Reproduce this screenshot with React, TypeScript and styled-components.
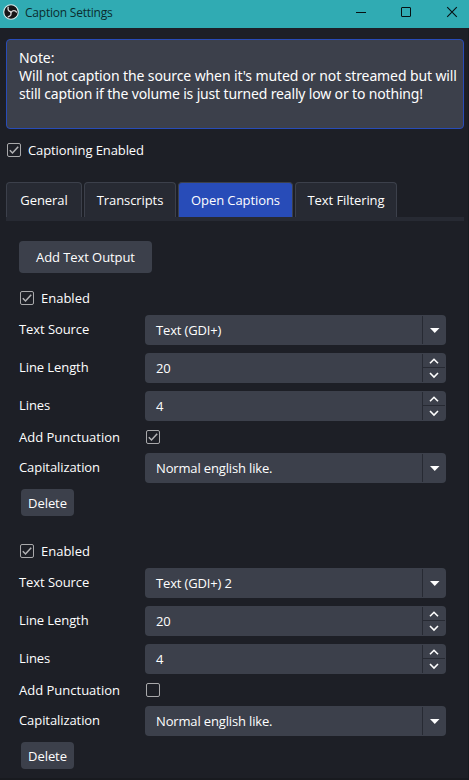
import React, { useState } from "react";
import styled, { createGlobalStyle } from "styled-components";

const GlobalStyle = createGlobalStyle`
  * { box-sizing: border-box; }
  body { margin: 0; background: #1d1f26; }
`;

const Window = styled.main`
  width: 469px;
  height: 780px;
  overflow: hidden;
  display: flex;
  flex-direction: column;
  background: #1d1f26;
  color: #fefefe;
  font: 13px/18px "Open Sans", sans-serif;
  box-shadow: inset -1px -2px #181a1f;
`;

const TitleBar = styled.header`
  flex: none;
  width: 469px;
  height: 28px;
  display: flex;
  align-items: center;
  padding: 0 10px 4px 3px;
  background: #30abb3;
  color: #0b2c2e;
`;

const Title = styled.h1`
  margin: 0 auto 0 6px;
  padding-top: 1px;
  font: 12px/18px "Open Sans", sans-serif;
  letter-spacing: -0.22px;
`;

const WindowControls = styled.div`
  display: flex;
  gap: 29px;
`;

const ControlButton = styled.button`
  width: 16px;
  height: 16px;
  padding: 0;
  border: 0;
  background: none;
  color: #071012;
  svg { display: block; }
`;

const Body = styled.div`
  display: flex;
  flex-direction: column;
  padding: 11px 5px 0 6px;
`;

const Note = styled.div`
  width: 458px;
  height: 90px;
  padding: 9px 0 0 12px;
  border: 1px solid #284cb8;
  border-radius: 4px;
  background: #3c404b;
  font: 14px/18px "Noto Sans", sans-serif;
  white-space: nowrap;
`;

const NoteLine = styled.div<{ $spacing: number }>`
  letter-spacing: ${(p) => p.$spacing}px;
`;

const CheckLabel = styled.label`
  display: flex;
  align-items: center;
  gap: 7px;
  height: 14px;
  padding-left: 1px;
  white-space: nowrap;
`;

const MainCheck = styled.div`
  margin-top: 14px;
  letter-spacing: -0.1px;
`;

const CheckBox = styled.button`
  flex: none;
  width: 14px;
  height: 14px;
  padding: 0;
  border: 1px solid #a9a9ab;
  border-radius: 2px;
  background: transparent;
  color: #b4b4b6;
  svg { display: block; }
`;

const Tabs = styled.nav`
  display: flex;
  gap: 2px;
  width: 458px;
  height: 39px;
  margin-top: 25px;
  border-bottom: 4px solid #272a33;
`;

const Tab = styled.button<{ $width: number; $active: boolean }>`
  width: ${(p) => p.$width}px;
  height: 35px;
  padding: 0 0 1px;
  border: 1px solid #3c404b;
  border-bottom: 0;
  border-radius: 4px 4px 0 0;
  background: ${(p) => (p.$active ? "#284cb8" : "#272a33")};
  color: inherit;
  font: inherit;
  letter-spacing: -0.08px;
  white-space: nowrap;
`;

const Panel = styled.section`
  display: flex;
  flex-direction: column;
  padding: 20px 13px 0;
`;

const Button = styled.button<{ $small?: boolean }>`
  width: ${(p) => (p.$small ? 53 : 133)}px;
  height: ${(p) => (p.$small ? 27 : 32)}px;
  margin-left: ${(p) => (p.$small ? 2 : 0)}px;
  padding: ${(p) => (p.$small ? "1px 0 0" : "0 0 1px")};
  border: 0;
  border-radius: 4px;
  background: #3c404b;
  color: inherit;
  font: inherit;
  letter-spacing: -0.08px;
  white-space: nowrap;
`;

const Output = styled.section<{ $top: number }>`
  margin-top: ${(p) => p.$top}px;
`;

const Fields = styled.div`
  display: flex;
  flex-direction: column;
  gap: 8px;
  margin: 10px 0 6px;
`;

const Row = styled.div`
  display: grid;
  grid-template-columns: 126px 301px;
  align-items: center;
  height: 30px;
`;

const CheckRow = styled(Row)`
  height: 18px;
  margin: -1px 0;
`;

const Name = styled.span<{ $centered?: boolean }>`
  padding-bottom: ${(p) => (p.$centered ? 0 : 2)}px;
  letter-spacing: ${(p) => (p.$centered ? 0 : -0.08)}px;
`;

const CheckCell = styled.div`
  display: flex;
  padding-left: 1px;
`;

const Field = styled.div`
  display: flex;
  align-items: center;
  height: 30px;
  padding-left: 11px;
  border-radius: 4px;
  background: #3c404b;
`;

const Value = styled.span`
  flex: 1;
  letter-spacing: -0.15px;
`;

const FieldEnd = styled.div`
  display: flex;
  flex-direction: column;
  width: 24px;
  height: 28px;
  border-left: 1px solid #272a33;
  svg { display: block; }
`;

const Step = styled.button`
  display: block;
  width: 22px;
  height: 13px;
  padding: 0;
  border: 0;
  background: none;
  color: #fefefe;
  & + & { height: 14px; border-top: 1px solid #272a33; }
`;

function Check({ initial, label }: { initial: boolean; label: string }) {
  const [on, setOn] = useState(initial);
  return (
    <CheckBox type="button" role="checkbox" aria-checked={on} aria-label={label} onClick={() => setOn(!on)}>
      {on && (
        <svg width="12" height="12" viewBox="0 0 12 12" fill="none" stroke="currentColor" strokeWidth="1.5">
          <path d="M1.8 6.3 4.5 9 10.2 2.7" />
        </svg>
      )}
    </CheckBox>
  );
}

function Logo() {
  return (
    <svg width="16" height="16" viewBox="0 0 16 16">
      <circle cx="8" cy="8" r="7.3" fill="#171516" stroke="#d7eeee" strokeWidth="1.1" />
      <g fill="none" stroke="#d5d3d4" strokeWidth="1.35" strokeLinecap="round">
        <path d="M8 7.6C5.7 7.5 4.5 5.6 5.2 3.3" />
        <path d="M8 7.6C5.7 7.5 4.5 5.6 5.2 3.3" transform="rotate(120 8 8)" />
        <path d="M8 7.6C5.7 7.5 4.5 5.6 5.2 3.3" transform="rotate(240 8 8)" />
      </g>
    </svg>
  );
}

function SelectField({ value }: { value: string }) {
  return (
    <Field>
      <Value>{value}</Value>
      <FieldEnd>
        <svg width="23" height="28" viewBox="0 0 23 28">
          <path d="M7 12h9.5l-4.75 5z" fill="#fefefe" />
        </svg>
      </FieldEnd>
    </Field>
  );
}

function NumberField({ initial }: { initial: number }) {
  const [value, setValue] = useState(initial);
  return (
    <Field>
      <Value>{value}</Value>
      <FieldEnd>
        <Step type="button" aria-label="Increase" onClick={() => setValue(value + 1)}>
          <svg width="22" height="13" viewBox="0 0 22 13" fill="none" stroke="currentColor" strokeWidth="1.6">
            <path d="M7 9.3 11 5.3 15 9.3" />
          </svg>
        </Step>
        <Step type="button" aria-label="Decrease" onClick={() => setValue(value - 1)}>
          <svg width="22" height="13" viewBox="0 0 22 13" fill="none" stroke="currentColor" strokeWidth="1.6">
            <path d="M7 5 11 9 15 5" />
          </svg>
        </Step>
      </FieldEnd>
    </Field>
  );
}

interface OutputProps {
  source: string;
  punctuation: boolean;
  top: number;
}

function TextOutput({ source, punctuation, top }: OutputProps) {
  return (
    <Output $top={top}>
      <CheckLabel>
        <Check initial label="Enabled" />
        Enabled
      </CheckLabel>
      <Fields>
        <Row><Name>Text Source</Name><SelectField value={source} /></Row>
        <Row><Name>Line Length</Name><NumberField initial={20} /></Row>
        <Row><Name>Lines</Name><NumberField initial={4} /></Row>
        <CheckRow>
          <Name $centered>Add Punctuation</Name>
          <CheckCell><Check initial={punctuation} label="Add Punctuation" /></CheckCell>
        </CheckRow>
        <Row><Name>Capitalization</Name><SelectField value="Normal english like." /></Row>
      </Fields>
      <Button $small>Delete</Button>
    </Output>
  );
}

const TABS = [
  { name: "General", width: 76 },
  { name: "Transcripts", width: 92 },
  { name: "Open Captions", width: 115 },
  { name: "Text Filtering", width: 102 },
];

export default function App() {
  return (
    <>
      <GlobalStyle />
      <Window>
        <TitleBar>
          <Logo />
          <Title>Caption Settings</Title>
          <WindowControls>
            <ControlButton aria-label="Minimize">
              <svg width="16" height="16" stroke="currentColor"><path d="M3 8.5h10" /></svg>
            </ControlButton>
            <ControlButton aria-label="Maximize">
              <svg width="16" height="16" fill="none" stroke="currentColor"><rect x="3.5" y="3.5" width="9" height="9" rx="0.5" /></svg>
            </ControlButton>
            <ControlButton aria-label="Close">
              <svg width="16" height="16" stroke="currentColor" strokeWidth="1.1"><path d="M4.2 3.2 13.8 12.8M13.8 3.2 4.2 12.8" /></svg>
            </ControlButton>
          </WindowControls>
        </TitleBar>
        <Body>
          <Note>
            <NoteLine $spacing={-0.1}>Note:</NoteLine>
            <NoteLine $spacing={-0.11}>Will not caption the source when it's muted or not streamed but will</NoteLine>
            <NoteLine $spacing={-0.16}>still caption if the volume is just turned really low or to nothing!</NoteLine>
          </Note>
          <MainCheck>
            <CheckLabel>
              <Check initial label="Captioning Enabled" />
              Captioning Enabled
            </CheckLabel>
          </MainCheck>
          <Tabs>
            {TABS.map((tab) => (
              <Tab key={tab.name} $width={tab.width} $active={tab.name === "Open Captions"}>{tab.name}</Tab>
            ))}
          </Tabs>
          <Panel>
            <Button>Add Text Output</Button>
            <TextOutput source="Text (GDI+)" punctuation top={18} />
            <TextOutput source="Text (GDI+) 2" punctuation={false} top={28} />
          </Panel>
        </Body>
      </Window>
    </>
  );
}
